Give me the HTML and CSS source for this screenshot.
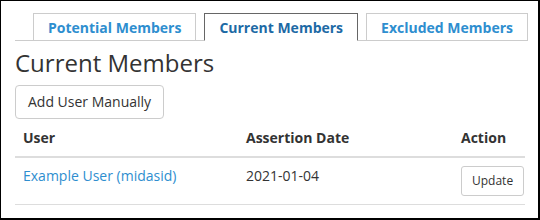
FILE: index.html
```html
<!DOCTYPE html>
<html lang="en">
    <head>
        <meta charset="UTF-8">
        <title>Current Members</title>
        <link rel="stylesheet" href="styles.css">
    </head>
    <body>
        <div class="frame">
            <ul class="tabs">
                <li><a href="#">Potential Members</a></li>
                <li class="active"><a href="#">Current Members</a></li>
                <li><a href="#">Excluded Members</a></li>
            </ul>

            <h2 class="title">Current Members</h2>
            <button class="btn">Add User Manually</button>

            <table class="members">
                <thead>
                    <tr>
                        <th class="col-user">User</th>
                        <th class="col-date">Assertion Date</th>
                        <th>Action</th>
                    </tr>
                </thead>
                <tbody>
                    <tr>
                        <td><a href="#">Example User (midasid)</a></td>
                        <td>2021-01-04</td>
                        <td><button class="btn btn-sm">Update</button></td>
                    </tr>
                </tbody>
            </table>
        </div>
    </body>
</html>
```

FILE: styles.css
```css
html, body{
    margin: 0;
    padding: 0;
}

body{
    font-family: "Open Sans", "Liberation Sans", sans-serif;
    font-size: 14px;
    line-height: 20px;
    color: #333;
    background-color: #fff;
}

.frame{
    box-sizing: border-box;
    width: 540px;
    height: 220px;
    border-style: solid;
    border-color: #000;
    border-width: 1px 2px 2px 1px;
    padding: 12px 14px 0 14px;
    overflow: hidden;
}

/* tabs */
.tabs{
    display: flex;
    list-style: none;
    margin: 0;
    padding: 0 0 0 18px;
    border-bottom: 1px solid #ccc;
}

.tabs li{
    flex-shrink: 0;
    margin-right: 8px;
    margin-bottom: -1px;
}

.tabs a{
    display: block;
    white-space: nowrap;
    padding: 4px 14px 2px 14px;
    border: 1px solid #ccc;
    font-weight: bold;
    color: #2e8ecf;
    text-decoration: none;
    background-color: #fff;
}

.tabs .active a{
    border-color: #666;
    border-bottom-color: #fff;
    color: #1d6aa5;
}

.title{
    margin: 9px 0 9px 0;
    font-size: 24px;
    line-height: 26px;
    font-weight: normal;
    color: #333;
}

.btn{
    display: inline-block;
    font-family: inherit;
    font-size: 14px;
    line-height: 20px;
    padding: 6px 12px;
    border: 1px solid #ccc;
    border-radius: 4px;
    background-color: #fff;
    color: #333;
}

.btn-sm{
    font-size: 12px;
    line-height: 18px;
    padding: 5px 10px;
    border-radius: 3px;
}

/* table */
.members{
    width: 510px;
    margin-top: 1px;
    border-collapse: collapse;
    table-layout: fixed;
}

.members th, .members td{
    box-sizing: border-box;
    padding: 8px;
    text-align: left;
    vertical-align: top;
}

.members th{
    font-weight: bold;
    border-bottom: 2px solid #ddd;
}

.members td{
    border-bottom: 1px solid #ddd;
}

.col-user{
    width: 223px;
}

.col-date{
    width: 215px;
}

.members a{
    color: #2e8ecf;
    text-decoration: none;
}
```
